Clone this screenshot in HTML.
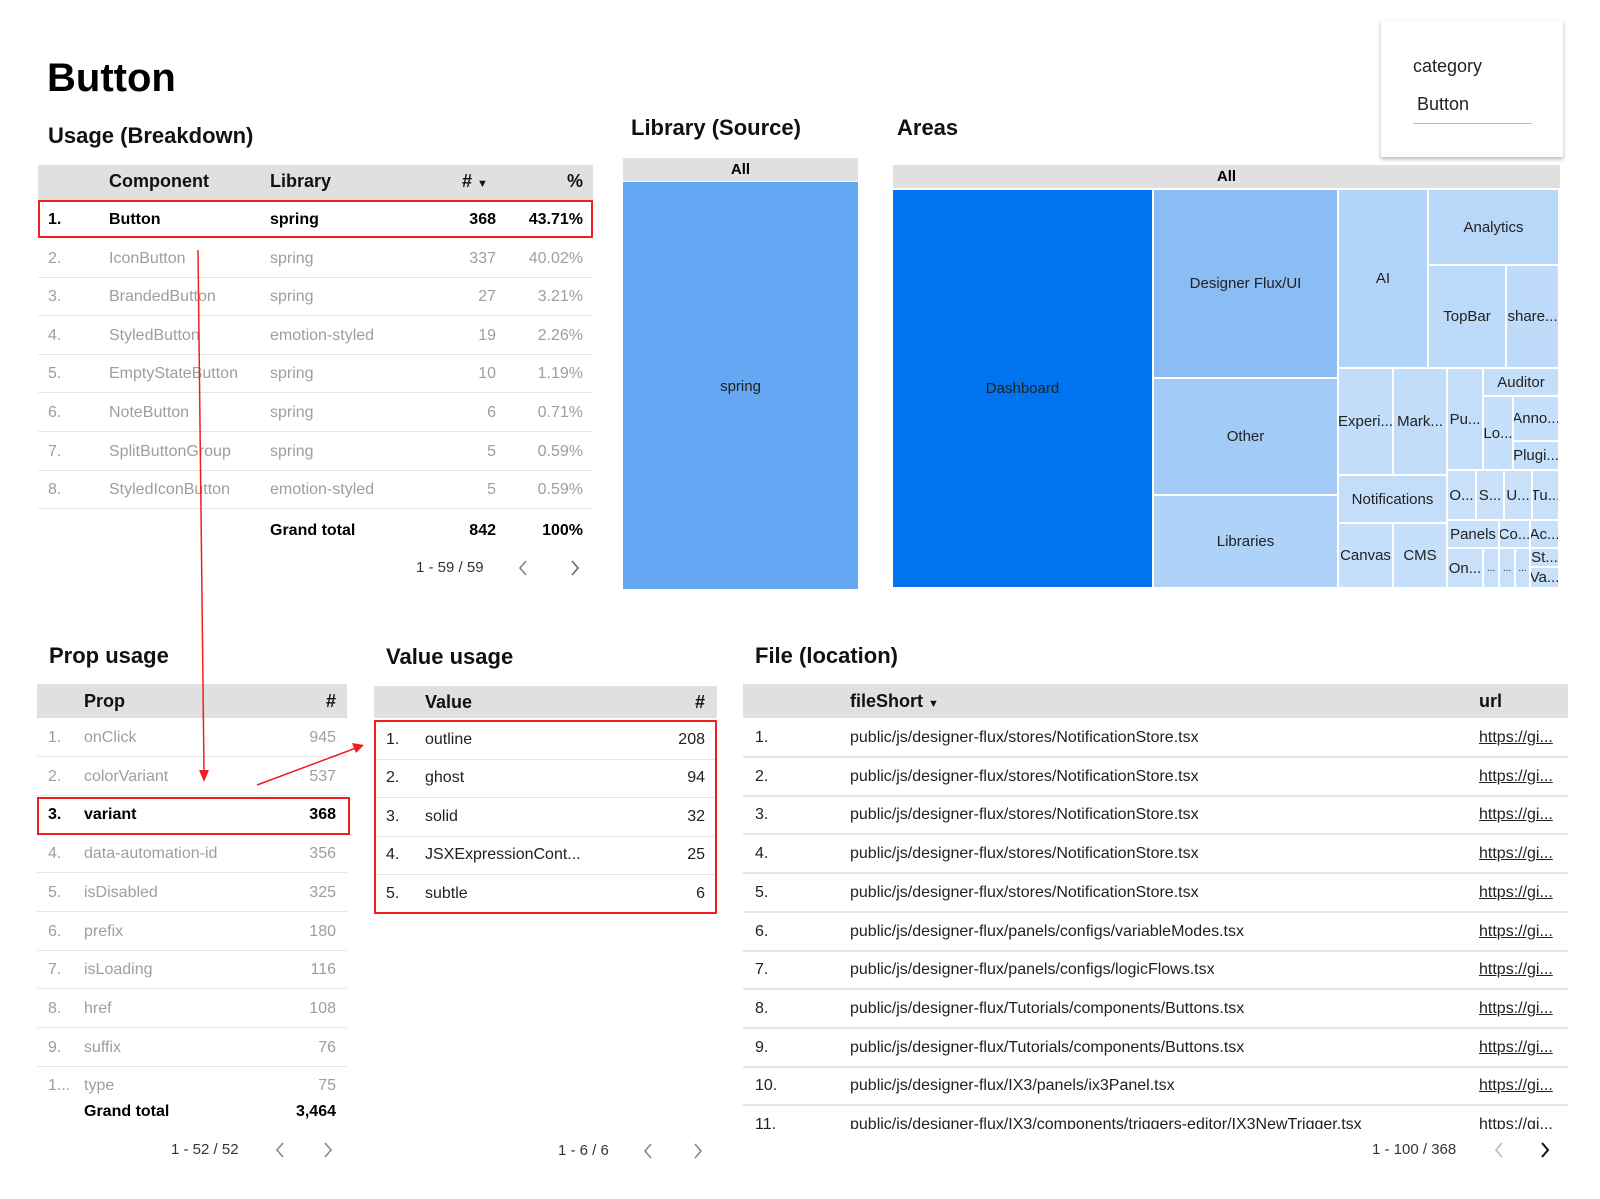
<!DOCTYPE html>
<html><head><meta charset="utf-8">
<style>
*{margin:0;padding:0;box-sizing:border-box}
body{width:1600px;height:1199px;background:#fff;position:relative;overflow:hidden;font-family:"Liberation Sans",Arial,sans-serif;color:#212121}
.a{position:absolute}
.h1{font-size:40px;font-weight:bold;color:#000}
.h2{font-size:22px;font-weight:bold;color:#111}
.hdr{background:#e0e0e0}
.c{position:absolute;white-space:nowrap;font-size:16px}
.r{text-align:right}
.b{font-weight:bold;color:#000}
.g{color:#9e9e9e}
.hd{font-size:18px;font-weight:bold;color:#111}
.sep{position:absolute;height:1px;background:#e6e6e6}
.red{position:absolute;border:2px solid #f01e1e}
.tm{position:absolute;display:flex;align-items:center;justify-content:center;font-size:15px;color:#222;border-right:2px solid #fff;border-bottom:2px solid #fff;overflow:hidden;white-space:nowrap}
.pg{position:absolute;font-size:15px;color:#333;white-space:nowrap}
</style></head><body>

<div class="a h1" style="left:47px;top:53px;line-height:50px">Button</div>

<!-- Usage -->
<div class="a h2" style="left:48px;top:123px">Usage (Breakdown)</div>
<div class="a hdr" style="left:38px;top:165px;width:555px;height:35px"></div>
<div class="c hd" style="left:109px;top:171px">Component</div>
<div class="c hd" style="left:270px;top:171px">Library</div>
<div class="c hd" style="left:462px;top:171px"># <span style="font-size:11px">▼</span></div>
<div class="c hd r" style="right:1017px;top:171px">%</div>
<div class="red" style="left:38px;top:200px;width:555px;height:38px"></div>
<div id="usage"></div>
<div class="c b" style="left:270px;top:522px">Grand total</div>
<div class="c b r" style="right:1104px;top:522px">842</div>
<div class="c b r" style="right:1017px;top:522px">100%</div>
<div class="pg" style="left:416px;top:559px">1 - 59 / 59</div>
<svg class="a" style="left:518px;top:559px" width="70" height="18"><polyline points="8,2 2,9 8,16" fill="none" stroke="#888" stroke-width="1.6"/><polyline points="54,2 60,9 54,16" fill="none" stroke="#666" stroke-width="1.6"/></svg>

<!-- Library -->
<div class="a h2" style="left:631px;top:115px">Library (Source)</div>
<div class="a hdr" style="left:623px;top:158px;width:235px;height:23px"></div>
<div class="c b" style="left:623px;width:235px;text-align:center;top:161px;font-size:15px">All</div>
<div class="a" style="left:623px;top:182px;width:235px;height:407px;background:#64a8f4"></div>
<div class="c" style="left:623px;width:235px;text-align:center;top:378px;font-size:15px">spring</div>

<!-- Areas -->
<div class="a h2" style="left:897px;top:115px">Areas</div>
<div class="a hdr" style="left:893px;top:165px;width:667px;height:23px"></div>
<div class="c b" style="left:893px;width:667px;text-align:center;top:168px;font-size:15px">All</div>
<div class="tm" style="left:893px;top:190px;width:261px;height:399px;background:#0073ee">Dashboard</div>
<div class="tm" style="left:1154px;top:190px;width:185px;height:189px;background:#8abdf4">Designer Flux/UI</div>
<div class="tm" style="left:1154px;top:379px;width:185px;height:117px;background:#a3cbf7">Other</div>
<div class="tm" style="left:1154px;top:496px;width:185px;height:93px;background:#aed2f8">Libraries</div>
<div class="tm" style="left:1339px;top:190px;width:90px;height:179px;background:#b2d4f8">AI</div>
<div class="tm" style="left:1429px;top:190px;width:131px;height:76px;background:#b8d8f9">Analytics</div>
<div class="tm" style="left:1429px;top:266px;width:78px;height:103px;background:#bcdaf9">TopBar</div>
<div class="tm" style="left:1507px;top:266px;width:53px;height:103px;background:#bedbf9">share...</div>
<div class="tm" style="left:1339px;top:369px;width:55px;height:107px;background:#c1ddfa">Experi...</div>
<div class="tm" style="left:1394px;top:369px;width:54px;height:107px;background:#c1ddfa">Mark...</div>
<div class="tm" style="left:1448px;top:369px;width:36px;height:102px;background:#c4defa">Pu...</div>
<div class="tm" style="left:1484px;top:369px;width:76px;height:28px;background:#c4defa">Auditor</div>
<div class="tm" style="left:1484px;top:397px;width:30px;height:74px;background:#c6dffa">Lo...</div>
<div class="tm" style="left:1514px;top:397px;width:46px;height:45px;background:#c6dffa">Anno...</div>
<div class="tm" style="left:1514px;top:442px;width:46px;height:29px;background:#c6dffa">Plugi...</div>
<div class="tm" style="left:1339px;top:476px;width:109px;height:48px;background:#c4defa">Notifications</div>
<div class="tm" style="left:1339px;top:524px;width:55px;height:65px;background:#c6dffa">Canvas</div>
<div class="tm" style="left:1394px;top:524px;width:54px;height:65px;background:#c6dffa">CMS</div>
<div class="tm" style="left:1448px;top:471px;width:29px;height:50px;background:#c8e0fa">O...</div>
<div class="tm" style="left:1477px;top:471px;width:28px;height:50px;background:#c8e0fa">S...</div>
<div class="tm" style="left:1505px;top:471px;width:28px;height:50px;background:#c8e0fa">U...</div>
<div class="tm" style="left:1533px;top:471px;width:27px;height:50px;background:#c8e0fa">Tu...</div>
<div class="tm" style="left:1448px;top:521px;width:52px;height:28px;background:#c8e0fa">Panels</div>
<div class="tm" style="left:1500px;top:521px;width:31px;height:28px;background:#c8e0fa">Co...</div>
<div class="tm" style="left:1531px;top:521px;width:29px;height:28px;background:#c8e0fa">Ac...</div>
<div class="tm" style="left:1448px;top:549px;width:36px;height:40px;background:#c8e0fa">On...</div>
<div class="tm" style="left:1484px;top:549px;width:16px;height:40px;background:#c8e0fa;font-size:10px">...</div>
<div class="tm" style="left:1500px;top:549px;width:16px;height:40px;background:#c8e0fa;font-size:10px">...</div>
<div class="tm" style="left:1516px;top:549px;width:15px;height:40px;background:#c8e0fa;font-size:10px">...</div>
<div class="tm" style="left:1531px;top:549px;width:29px;height:19px;background:#c8e0fa">St...</div>
<div class="tm" style="left:1531px;top:568px;width:29px;height:21px;background:#c8e0fa">Va...</div>

<!-- filter -->
<div class="a" style="left:1381px;top:21px;width:182px;height:136px;background:#fff;box-shadow:0 2px 4px rgba(0,0,0,.3)"></div>
<div class="c" style="left:1413px;top:56px;font-size:18px;color:#222">category</div>
<div class="c" style="left:1417px;top:94px;font-size:18px;color:#222">Button</div>
<div class="a" style="left:1413px;top:123px;width:119px;height:1px;background:#bbb"></div>

<!-- Prop usage -->
<div class="a h2" style="left:49px;top:643px">Prop usage</div>
<div class="a hdr" style="left:37px;top:684px;width:310px;height:34px"></div>
<div class="c hd" style="left:84px;top:691px">Prop</div>
<div class="c hd r" style="right:1264px;top:691px">#</div>
<div id="prop"></div>
<div class="red" style="left:37px;top:797px;width:313px;height:38px"></div>
<div class="c b" style="left:84px;top:1103px">Grand total</div>
<div class="c b r" style="right:1264px;top:1103px">3,464</div>
<div class="pg" style="left:171px;top:1141px">1 - 52 / 52</div>
<svg class="a" style="left:275px;top:1141px" width="70" height="18"><polyline points="8,2 2,9 8,16" fill="none" stroke="#888" stroke-width="1.6"/><polyline points="50,2 56,9 50,16" fill="none" stroke="#888" stroke-width="1.6"/></svg>

<!-- Value usage -->
<div class="a h2" style="left:386px;top:644px">Value usage</div>
<div class="a hdr" style="left:374px;top:686px;width:343px;height:32px"></div>
<div class="c hd" style="left:425px;top:692px">Value</div>
<div class="c hd r" style="right:895px;top:692px">#</div>
<div id="val"></div>
<div class="red" style="left:374px;top:720px;width:343px;height:194px"></div>
<div class="pg" style="left:558px;top:1142px">1 - 6 / 6</div>
<svg class="a" style="left:643px;top:1142px" width="70" height="18"><polyline points="8,2 2,9 8,16" fill="none" stroke="#888" stroke-width="1.6"/><polyline points="52,2 58,9 52,16" fill="none" stroke="#888" stroke-width="1.6"/></svg>

<!-- File -->
<div class="a h2" style="left:755px;top:643px">File (location)</div>
<div class="a hdr" style="left:743px;top:684px;width:825px;height:34px"></div>
<div class="c hd" style="left:850px;top:691px">fileShort <span style="font-size:11px">▼</span></div>
<div class="c hd" style="left:1479px;top:691px">url</div>
<div class="a" style="left:743px;top:718px;width:825px;height:411px;overflow:hidden" id="file"></div>
<div class="pg" style="left:1372px;top:1141px">1 - 100 / 368</div>
<svg class="a" style="left:1494px;top:1141px" width="70" height="18"><polyline points="8,2 2,9 8,16" fill="none" stroke="#bbb" stroke-width="1.6"/><polyline points="48,2 54,9 48,16" fill="none" stroke="#111" stroke-width="2"/></svg>

<!-- arrows -->
<svg class="a" style="left:0;top:0" width="1600" height="1199">
<line x1="198" y1="250" x2="204" y2="772" stroke="#f01e1e" stroke-width="1.5"/>
<polygon points="199,770 209,770 204,782" fill="#f01e1e"/>
<line x1="257" y1="785" x2="356" y2="748" stroke="#f01e1e" stroke-width="1.5"/>
<polygon points="364,745 352,743 356,753" fill="#f01e1e"/>
</svg>

<script>
function add(id,html){document.getElementById(id).outerHTML=html;}
var u=[["1.","Button","spring","368","43.71%"],["2.","IconButton","spring","337","40.02%"],["3.","BrandedButton","spring","27","3.21%"],["4.","StyledButton","emotion-styled","19","2.26%"],["5.","EmptyStateButton","spring","10","1.19%"],["6.","NoteButton","spring","6","0.71%"],["7.","SplitButtonGroup","spring","5","0.59%"],["8.","StyledIconButton","emotion-styled","5","0.59%"]];
var h="";
u.forEach(function(r,i){var y=200+i*38.6;var cl=i==0?"b":"g";var t=y+11;
h+='<div class="c '+cl+'" style="left:48px;top:'+t+'px">'+r[0]+'</div><div class="c '+cl+'" style="left:109px;top:'+t+'px">'+r[1]+'</div><div class="c '+cl+'" style="left:270px;top:'+t+'px">'+r[2]+'</div><div class="c r '+cl+'" style="right:1104px;top:'+t+'px">'+r[3]+'</div><div class="c r '+cl+'" style="right:1017px;top:'+t+'px">'+r[4]+'</div>';
if(i>0)h+='<div class="sep" style="left:38px;width:555px;top:'+(y+38)+'px"></div>';});
add("usage",h);
var p=[["1.","onClick","945"],["2.","colorVariant","537"],["3.","variant","368"],["4.","data-automation-id","356"],["5.","isDisabled","325"],["6.","prefix","180"],["7.","isLoading","116"],["8.","href","108"],["9.","suffix","76"],["1...","type","75"]];
h="";
p.forEach(function(r,i){var y=718+i*38.7;var cl=i==2?"b":"g";var t=y+11;
h+='<div class="c '+cl+'" style="left:48px;top:'+t+'px">'+r[0]+'</div><div class="c '+cl+'" style="left:84px;top:'+t+'px">'+r[1]+'</div><div class="c r '+cl+'" style="right:1264px;top:'+t+'px">'+r[2]+'</div>';
if(i<9)h+='<div class="sep" style="left:37px;width:310px;top:'+(y+38)+'px"></div>';});
add("prop",h);
var v=[["1.","outline","208"],["2.","ghost","94"],["3.","solid","32"],["4.","JSXExpressionCont...","25"],["5.","subtle","6"]];
h="";
v.forEach(function(r,i){var y=721+i*38.4;var t=y+10;
h+='<div class="c" style="left:386px;top:'+t+'px">'+r[0]+'</div><div class="c" style="left:425px;top:'+t+'px">'+r[1]+'</div><div class="c r" style="right:895px;top:'+t+'px">'+r[2]+'</div>';
if(i<4)h+='<div class="sep" style="left:374px;width:343px;top:'+(y+38)+'px"></div>';});
add("val",h);
var f=["public/js/designer-flux/stores/NotificationStore.tsx","public/js/designer-flux/stores/NotificationStore.tsx","public/js/designer-flux/stores/NotificationStore.tsx","public/js/designer-flux/stores/NotificationStore.tsx","public/js/designer-flux/stores/NotificationStore.tsx","public/js/designer-flux/panels/configs/variableModes.tsx","public/js/designer-flux/panels/configs/logicFlows.tsx","public/js/designer-flux/Tutorials/components/Buttons.tsx","public/js/designer-flux/Tutorials/components/Buttons.tsx","public/js/designer-flux/IX3/panels/ix3Panel.tsx","public/js/designer-flux/IX3/components/triggers-editor/IX3NewTrigger.tsx"];
h="";
f.forEach(function(r,i){var y=i*38.7;var t=y+11;
h+='<div class="c" style="left:12px;top:'+t+'px">'+(i+1)+'.</div><div class="c" style="left:107px;top:'+t+'px">'+r+'</div><div class="c" style="left:736px;top:'+t+'px;text-decoration:underline">https://gi...</div>';
h+='<div class="sep" style="left:0;width:825px;top:'+(y+38)+'px;height:2px"></div>';});
document.getElementById("file").innerHTML=h;
</script>
</body></html>
